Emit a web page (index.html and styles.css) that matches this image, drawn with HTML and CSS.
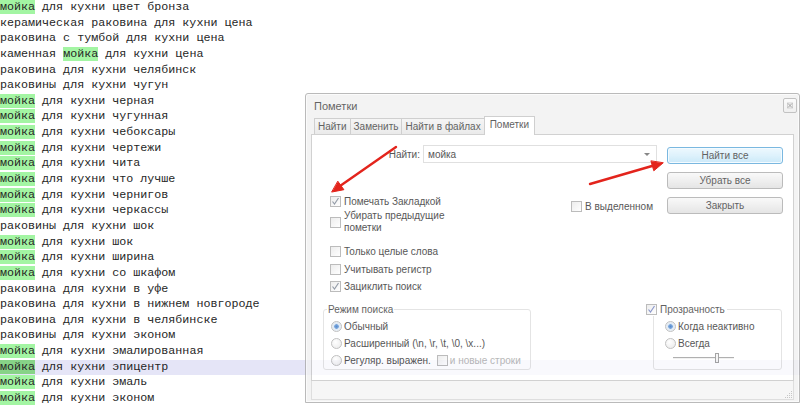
FILE: index.html
```html
<!DOCTYPE html>
<html lang="ru">
<head>
<meta charset="utf-8">
<title>Пометки</title>
<link rel="stylesheet" href="styles.css">
</head>
<body>
<div class="editor">
  <div class="line"><span class="hl">мойка</span> для кухни цвет бронза</div>
  <div class="line">керамическая раковина для кухни цена</div>
  <div class="line">раковина с тумбой для кухни цена</div>
  <div class="line">каменная <span class="hl">мойка</span> для кухни цена</div>
  <div class="line">раковина для кухни челябинск</div>
  <div class="line">раковины для кухни чугун</div>
  <div class="line"><span class="hl">мойка</span> для кухни черная</div>
  <div class="line"><span class="hl">мойка</span> для кухни чугунная</div>
  <div class="line"><span class="hl">мойка</span> для кухни чебоксары</div>
  <div class="line"><span class="hl">мойка</span> для кухни чертежи</div>
  <div class="line"><span class="hl">мойка</span> для кухни чита</div>
  <div class="line"><span class="hl">мойка</span> для кухни что лучше</div>
  <div class="line"><span class="hl">мойка</span> для кухни чернигов</div>
  <div class="line"><span class="hl">мойка</span> для кухни черкассы</div>
  <div class="line">раковины для кухни шок</div>
  <div class="line"><span class="hl">мойка</span> для кухни шок</div>
  <div class="line"><span class="hl">мойка</span> для кухни ширина</div>
  <div class="line"><span class="hl">мойка</span> для кухни со шкафом</div>
  <div class="line">раковина для кухни в уфе</div>
  <div class="line">раковина для кухни в нижнем новгороде</div>
  <div class="line">раковина для кухни в челябинске</div>
  <div class="line">раковины для кухни эконом</div>
  <div class="line"><span class="hl">мойка</span> для кухни эмалированная</div>
  <div class="line current"><span class="hl">мойка</span> для кухни эпицентр</div>
  <div class="line"><span class="hl">мойка</span> для кухни эмаль</div>
  <div class="line"><span class="hl">мойка</span> для кухни эконом</div>
</div>

<div class="dialog">
  <div class="titlebar">
    <span class="title">Пометки</span>
    <span class="close"><svg width="12" height="13" viewBox="0 0 12 13"><rect x="3.5" y="4" width="5" height="5" fill="none" stroke="#c8c8c8" stroke-width="1"/><path d="M4 4.5l4 4M8 4.5l-4 4" stroke="#8a8a8a" stroke-width="1"/></svg></span>
  </div>
  <div class="tabs">
    <div class="tab">Найти</div>
    <div class="tab">Заменить</div>
    <div class="tab">Найти в файлах</div>
    <div class="tab active">Пометки</div>
  </div>
  <div class="panel">
    <div class="top">
      <div class="main">
        <div class="find-row">
          <span class="find-label">Найти:</span>
          <div class="combo"><span class="combo-text">мойка</span><span class="drop"></span></div>
        </div>
        <div class="options">
          <div class="checks">
            <div class="check"><span class="box"><svg width="9" height="9" viewBox="0 0 9 9"><path d="M1.5 4.5l2 2.5 4-6" fill="none" stroke="#7b8594" stroke-width="1.2"/></svg></span>Помечать Закладкой</div>
            <div class="check two"><span class="box"></span><span>Убирать предыдущие<br>пометки</span></div>
            <div class="check gap-lg"><span class="box"></span>Только целые слова</div>
            <div class="check gap-sm"><span class="box"></span>Учитывать регистр</div>
            <div class="check gap-xs"><span class="box"><svg width="9" height="9" viewBox="0 0 9 9"><path d="M1.5 4.5l2 2.5 4-6" fill="none" stroke="#7b8594" stroke-width="1.2"/></svg></span>Зациклить поиск</div>
          </div>
          <div class="check in-sel"><span class="box"></span>В выделенном</div>
        </div>
      </div>
      <div class="buttons">
        <div class="btn primary">Найти все</div>
        <div class="btn">Убрать все</div>
        <div class="btn">Закрыть</div>
      </div>
    </div>
    <div class="bottom">
      <fieldset class="group mode">
        <legend class="legend">Режим поиска</legend>
        <div class="radio-row first"><span class="radio on"></span>Обычный</div>
        <div class="radio-row"><span class="radio"></span>Расширенный (\n, \r, \t, \0, \x...)</div>
        <div class="radio-row"><span class="radio"></span>Регуляр. выражен.<span class="box multi"></span><span class="disabled">и новые строки</span></div>
      </fieldset>
      <fieldset class="group transp">
        <legend class="legend legend-check"><span class="box"><svg width="9" height="9" viewBox="0 0 9 9"><path d="M1.5 4.5l2 2.5 4-6" fill="none" stroke="#6f7fc0" stroke-width="1.2"/></svg></span>Прозрачность</legend>
        <div class="radio-row first"><span class="radio on"></span>Когда неактивно</div>
        <div class="radio-row"><span class="radio"></span>Всегда</div>
        <div class="slider"><span class="track seg1"></span><span class="thumb"></span><span class="track seg2"></span></div>
      </fieldset>
    </div>
  </div>
  <div class="status">
    <svg class="grip" width="10" height="10" viewBox="0 0 10 10"><g fill="#b8b8b8"><rect x="8" y="2" width="1" height="1"/><rect x="6" y="4" width="1" height="1"/><rect x="8" y="4" width="1" height="1"/><rect x="4" y="6" width="1" height="1"/><rect x="6" y="6" width="1" height="1"/><rect x="8" y="6" width="1" height="1"/><rect x="2" y="8" width="1" height="1"/><rect x="4" y="8" width="1" height="1"/><rect x="6" y="8" width="1" height="1"/><rect x="8" y="8" width="1" height="1"/></g></svg>
  </div>
</div>

<svg class="arrows" width="800" height="408" viewBox="0 0 800 408">
  <g stroke="#e3241c" stroke-width="2.4" stroke-linecap="round" fill="#e3241c">
    <line x1="396" y1="147" x2="340" y2="186"/>
    <polygon points="332,192 343.9,189.7 338,181.5" stroke-width="1"/>
    <line x1="590" y1="184" x2="652" y2="166"/>
    <polygon points="663,163 653.8,170.8 651,161.2" stroke-width="1"/>
  </g>
</svg>
</body>
</html>
```

FILE: styles.css
```css
html, body {
  margin: 0;
  padding: 0;
}

body {
  width: 800px;
  height: 408px;
  overflow: hidden;
  position: relative;
  background: #ffffff;
  font-family: "Liberation Sans", Arial, sans-serif;
}

/* ---------- editor text ---------- */
.editor {
  font-family: "Liberation Mono", "Courier New", monospace;
  font-size: 11.7px;
  line-height: 15.65px;
  color: #262626;
}

.line {
  height: 15.65px;
  white-space: pre;
}

.hl {
  background: #a3f5a3;
}

.line.current {
  background: #e5e5f7;
}

.line.current .hl {
  background: #87d387;
}

/* ---------- dialog window ---------- */
.dialog {
  position: absolute;
  left: 305px;
  top: 93px;
  width: 495px;
  height: 310px;
  box-sizing: border-box;
  border: 1px solid #a9a9a9;
  border-radius: 3px 3px 0 0;
  background: #f1f1f1;
  padding: 0 5px 2px 5px;
  display: flex;
  flex-direction: column;
  opacity: 0.8;
  font-size: 10px;
  color: #2c2c2c;
  box-shadow: inset 0 0 0 1px #fbfbfb;
}

.titlebar {
  height: 23px;
  display: flex;
  align-items: center;
  justify-content: space-between;
}

.title {
  padding-left: 3px;
  font-size: 11px;
  color: #3d3d3d;
}

.close {
  width: 14px;
  height: 15px;
  box-sizing: border-box;
  margin-right: -3px;
  border: 1px solid #b3b3b3;
  border-radius: 2px;
  background: linear-gradient(#fbfbfb, #ececec);
  display: flex;
  align-items: center;
  justify-content: center;
}

/* tabs */
.tabs {
  height: 17px;
  display: flex;
  align-items: flex-end;
  padding-left: 3px;
}

.tab {
  height: 16px;
  box-sizing: border-box;
  padding: 0 3px;
  border: 1px solid #c4c4c4;
  border-bottom: none;
  border-right: none;
  background: linear-gradient(#f3f3f3, #e6e6e6);
  display: flex;
  align-items: center;
  color: #3a3a3a;
}

.tab.active {
  position: relative;
  z-index: 1;
  height: 19px;
  margin-bottom: -1px;
  padding: 0 5px 3px 5px;
  background: #ffffff;
  border-right: 1px solid #c4c4c4;
}

/* panel */
.panel {
  flex: 1;
  box-sizing: border-box;
  border: 1px solid #c6c6c6;
  background: #ffffff;
  padding: 10px 10px 0 18px;
}

.top {
  display: flex;
}

.main {
  width: 327px;
}

.find-row {
  height: 18px;
  display: flex;
  align-items: center;
}

.find-label {
  width: 90px;
  margin-right: 3px;
  text-align: right;
}

.combo {
  width: 234px;
  height: 18px;
  box-sizing: border-box;
  border: 1px solid #d9d9d9;
  display: flex;
  align-items: center;
  justify-content: space-between;
  padding: 0 6px 0 4px;
}

.drop {
  width: 0;
  height: 0;
  border-left: 3px solid transparent;
  border-right: 3px solid transparent;
  border-top: 3px solid #6a6a6a;
}

.options {
  margin-top: 32px;
  display: flex;
  justify-content: space-between;
}

.checks {
  display: flex;
  flex-direction: column;
}

.check {
  height: 13px;
  line-height: 13px;
  display: flex;
  align-items: center;
  white-space: nowrap;
}

.check.two {
  height: 24px;
  line-height: 12px;
  margin-top: 2px;
}

.check.gap-lg { margin-top: 11px; }
.check.gap-sm { margin-top: 5px; }
.check.gap-xs { margin-top: 4px; }

.check.in-sel {
  margin-top: 5px;
  padding-right: 4px;
}

.box {
  width: 11px;
  height: 11px;
  box-sizing: border-box;
  flex: none;
  margin-right: 3px;
  border: 1px solid #acacac;
  background: linear-gradient(135deg, #e9e9e9, #ffffff);
  display: inline-flex;
  align-items: center;
  justify-content: center;
}

/* buttons */
.buttons {
  width: 116px;
  margin-left: 10px;
  margin-top: 2px;
  display: flex;
  flex-direction: column;
  gap: 8px;
}

.btn {
  height: 17px;
  box-sizing: border-box;
  border: 1px solid #ababab;
  border-radius: 3px;
  background: linear-gradient(#f8f8f8 0%, #ececec 50%, #dfdfdf 100%);
  display: flex;
  align-items: center;
  justify-content: center;
  color: #3a3a3a;
}

.btn.primary {
  border-color: #5aa7d9;
  background: linear-gradient(#eaf7fe 0%, #d6effc 50%, #bfe4f8 100%);
  box-shadow: inset 0 0 0 1px #f2fbff;
}

/* bottom groups */
.bottom {
  margin-top: 10px;
  margin-left: -7px;
  margin-right: 1px;
  display: flex;
  justify-content: space-between;
}

.group {
  margin: 0;
  min-width: 0;
  box-sizing: border-box;
  border: 1px solid #dedede;
  border-radius: 3px;
  padding: 0 0 2px 7px;
}

.mode {
  width: 208px;
}

.transp {
  width: 129px;
  padding-left: 11px;
}

.legend {
  padding: 0 1px;
  margin-left: -4px;
  height: 13px;
  line-height: 13px;
  color: #3a3a3a;
}

.legend-check {
  display: flex;
  align-items: center;
  margin-left: -19px;
  padding: 0 2px 0 0;
  background: #ffffff;
}

.radio-row {
  height: 13px;
  line-height: 13px;
  margin-top: 4px;
  display: flex;
  align-items: center;
  white-space: nowrap;
}

.radio {
  width: 11px;
  height: 11px;
  box-sizing: border-box;
  flex: none;
  margin-right: 2px;
  border: 1px solid #b2b2b2;
  border-radius: 50%;
  background: radial-gradient(circle at 40% 35%, #ffffff 0%, #e4e4e4 100%);
}

.radio.on {
  background: radial-gradient(circle, #2f6fbf 0%, #5d93d6 32%, #d6e4f2 40%, #f2f2f2 100%);
}

.box.multi {
  margin-left: 6px;
  margin-right: 2px;
}

.disabled {
  color: #a8a8a8;
}

.slider {
  height: 12px;
  margin: 2px 0 3px 8px;
  display: flex;
  align-items: center;
}

.track {
  height: 2px;
  box-sizing: border-box;
  border-top: 1px solid #9d9d9d;
  border-bottom: 1px solid #eeeeee;
}

.seg1 { width: 42px; }
.seg2 { width: 15px; }

.thumb {
  width: 4px;
  height: 10px;
  box-sizing: border-box;
  border: 1px solid #8f8f8f;
  background: #f4f4f4;
}

/* status */
.status {
  height: 19px;
  box-sizing: border-box;
  border: 1px solid #d6d6d6;
  border-top: none;
  background: #f4f4f4;
  display: flex;
  align-items: flex-end;
  justify-content: flex-end;
}

.grip {
  display: block;
}

/* annotation arrows */
.arrows {
  position: absolute;
  left: 0;
  top: 0;
  pointer-events: none;
}
```
